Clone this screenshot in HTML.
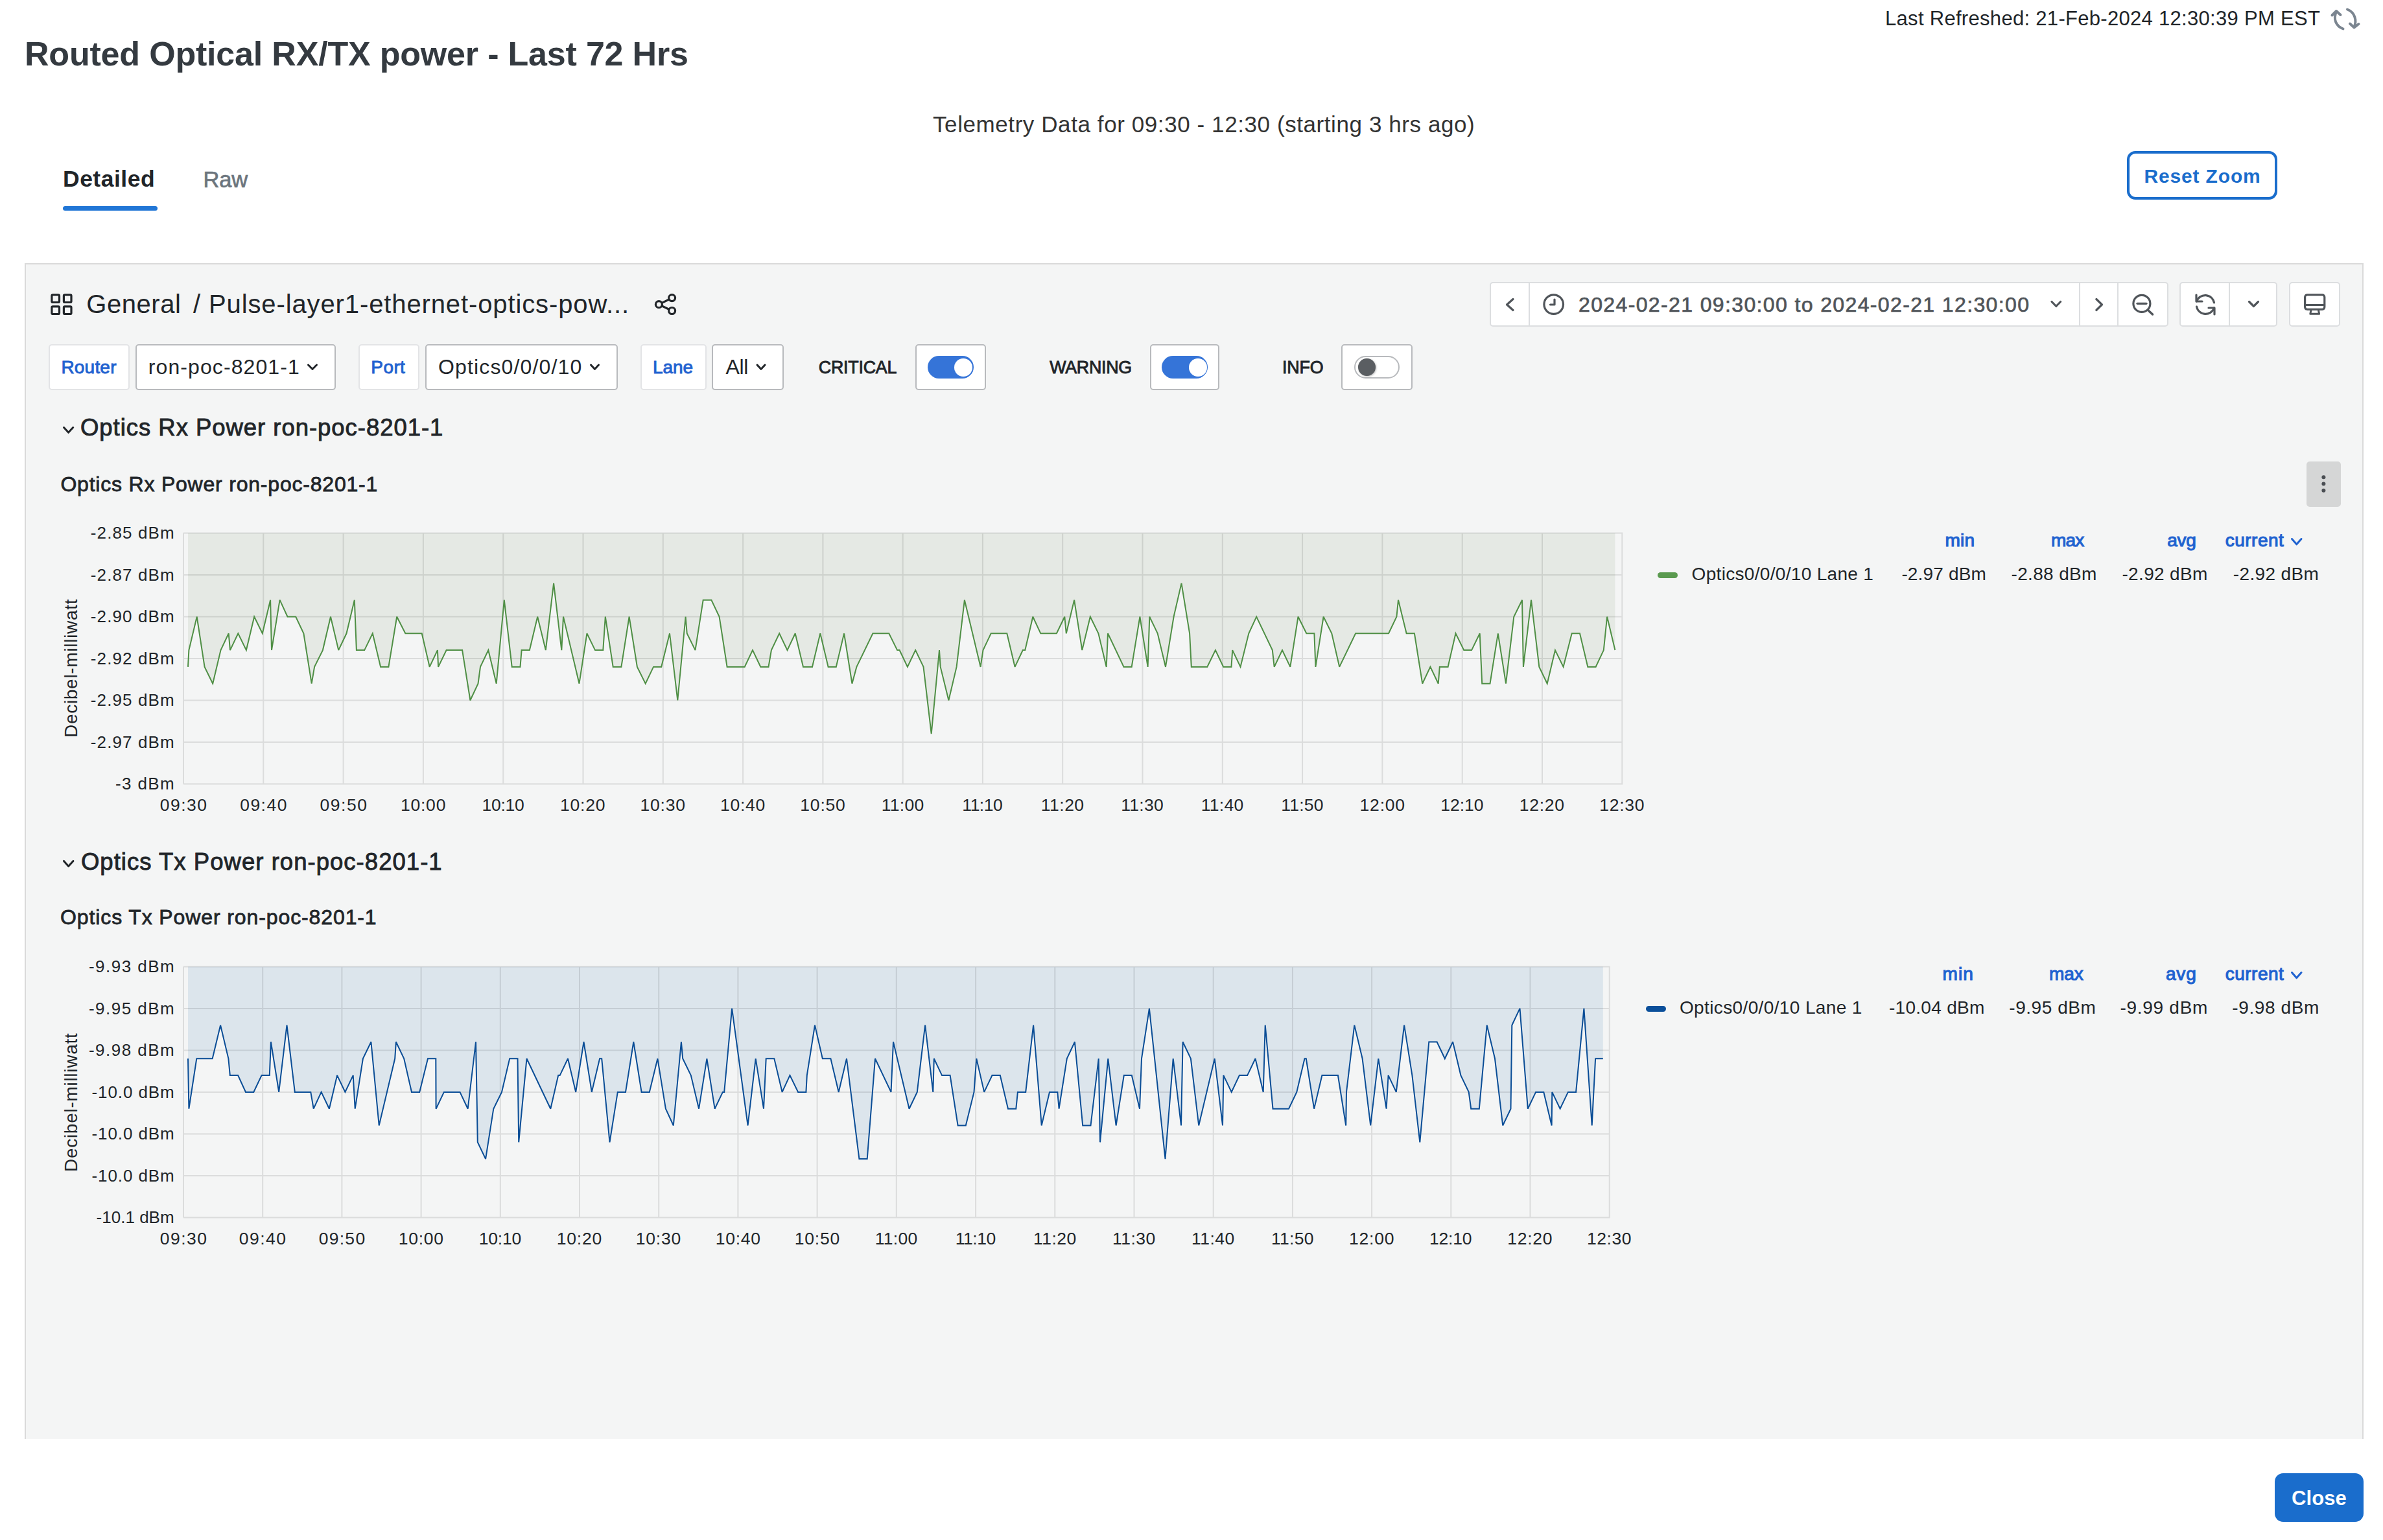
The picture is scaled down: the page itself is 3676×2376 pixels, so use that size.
<!DOCTYPE html>
<html><head><meta charset="utf-8">
<style>
html,body{margin:0;padding:0;}
body{width:3676px;height:2376px;position:relative;overflow:hidden;background:#ffffff;font-family:"Liberation Sans", sans-serif;}
.abs{position:absolute;}
.t{position:absolute;white-space:nowrap;font-family:"Liberation Sans", sans-serif;}
.box{position:absolute;box-sizing:border-box;background:#fff;}
</style></head><body>
<!-- panel -->
<div class="box" style="left:38px;top:406px;width:3608px;height:1814px;background:#f4f5f5;border:2px solid #dadada;border-bottom:none;"></div>
<!-- tab underline -->
<div class="abs" style="left:97px;top:318px;width:146px;height:7px;border-radius:4px;background:#2176d6;"></div>
<!-- reset zoom -->
<div class="box" style="left:3281px;top:233px;width:232px;height:75px;border:4px solid #1a6dcc;border-radius:13px;"></div>
<!-- close -->
<div class="abs" style="left:3509px;top:2273px;width:137px;height:75px;border-radius:13px;background:#1a6dcc;"></div>
<!-- time picker boxes -->
<div class="box" style="left:2298px;top:435px;width:1047px;height:69px;border:2px solid #dcdee0;border-radius:5px;"></div>
<div class="abs" style="left:2358px;top:436px;width:2px;height:67px;background:#dcdee0;"></div>
<div class="abs" style="left:3207px;top:436px;width:2px;height:67px;background:#dcdee0;"></div>
<div class="abs" style="left:3266px;top:436px;width:2px;height:67px;background:#dcdee0;"></div>
<div class="box" style="left:3362px;top:435px;width:151px;height:69px;border:2px solid #dcdee0;border-radius:5px;"></div>
<div class="abs" style="left:3438px;top:436px;width:2px;height:67px;background:#dcdee0;"></div>
<div class="box" style="left:3531px;top:435px;width:79px;height:69px;border:2px solid #dcdee0;border-radius:5px;"></div>
<!-- variable boxes -->
<div class="box" style="left:75px;top:531px;width:125px;height:71px;border:2px solid #e3e4e6;border-radius:5px;"></div>
<div class="box" style="left:209px;top:531px;width:309px;height:71px;border:2px solid #b8babd;border-radius:5px;"></div>
<div class="box" style="left:553px;top:531px;width:94px;height:71px;border:2px solid #e3e4e6;border-radius:5px;"></div>
<div class="box" style="left:656px;top:531px;width:297px;height:71px;border:2px solid #b8babd;border-radius:5px;"></div>
<div class="box" style="left:988px;top:531px;width:102px;height:71px;border:2px solid #e3e4e6;border-radius:5px;"></div>
<div class="box" style="left:1098px;top:531px;width:111px;height:71px;border:2px solid #b8babd;border-radius:5px;"></div>
<!-- toggles -->
<div class="box" style="left:1412px;top:531px;width:109px;height:71px;border:2px solid #b8babd;border-radius:5px;"></div>
<div class="abs" style="left:1431px;top:549px;width:71px;height:35px;border-radius:18px;background:#3574d8;"></div>
<div class="abs" style="left:1472px;top:552.5px;width:28px;height:28px;border-radius:50%;background:#fff;"></div>
<div class="box" style="left:1774px;top:531px;width:107px;height:71px;border:2px solid #b8babd;border-radius:5px;"></div>
<div class="abs" style="left:1792px;top:549px;width:71px;height:35px;border-radius:18px;background:#3574d8;"></div>
<div class="abs" style="left:1833.5px;top:552.5px;width:28px;height:28px;border-radius:50%;background:#fff;"></div>
<div class="box" style="left:2069px;top:531px;width:110px;height:71px;border:2px solid #b8babd;border-radius:5px;"></div>
<div class="box" style="left:2089px;top:549px;width:70px;height:35px;border:2px solid #b8babd;border-radius:18px;"></div>
<div class="abs" style="left:2095px;top:553px;width:26.5px;height:26.5px;border-radius:50%;background:#5a5e62;box-shadow:1px 1px 3px rgba(0,0,0,0.25);"></div>
<!-- kebab -->
<div class="abs" style="left:3558px;top:712px;width:53px;height:70px;border-radius:5px;background:#d5d6d6;"></div>
<!-- legend swatches -->
<div class="abs" style="left:2557px;top:883px;width:31px;height:9px;border-radius:5px;background:#5a9a4f;"></div>
<div class="abs" style="left:2538.5px;top:1552px;width:31px;height:9px;border-radius:5px;background:#0a4f9a;"></div>

<svg class="abs" style="left:0;top:0" width="3676" height="2376" viewBox="0 0 3676 2376">
<path d="M290.0 822.5 L290.0 1028.9 L291.4 1003.1 L303.7 951.5 L315.6 1028.9 L328.2 1054.7 L340.5 1003.1 L352.7 977.3 L355.0 1003.1 L367.3 977.3 L379.9 1003.1 L392.2 951.5 L404.8 977.3 L417.1 925.7 L419.0 1003.1 L431.6 925.7 L443.5 951.5 L456.2 951.5 L468.4 977.3 L480.7 1054.7 L485.1 1028.9 L497.9 1003.1 L510.0 951.5 L522.2 1003.1 L534.5 977.3 L546.8 925.7 L549.9 1003.1 L562.2 1003.1 L574.8 977.3 L587.1 1028.9 L599.4 1028.9 L612.2 951.5 L625.3 977.3 L638.5 977.3 L650.7 977.3 L662.7 1028.9 L674.9 1003.1 L676.1 1028.9 L688.6 1003.1 L713.1 1003.1 L725.4 1080.5 L737.5 1054.7 L741.0 1028.9 L753.3 1003.1 L765.7 1054.7 L777.8 925.7 L789.7 1028.9 L802.5 1028.9 L804.6 1003.1 L816.9 1003.1 L829.2 951.5 L841.8 1003.1 L854.1 899.9 L866.3 1003.1 L869.0 951.5 L893.5 1054.7 L905.4 977.3 L918.0 1003.1 L930.3 1003.1 L933.8 951.5 L945.7 1028.9 L958.4 1028.9 L970.6 951.5 L982.9 1028.9 L995.7 1054.7 L1008.0 1028.9 L1020.2 1028.9 L1033.0 977.3 L1045.3 1080.5 L1057.6 951.5 L1059.7 977.3 L1072.5 1003.1 L1084.7 925.7 L1097.4 925.7 L1109.6 951.5 L1121.6 1028.9 L1148.7 1028.9 L1161.0 1003.1 L1173.3 1028.9 L1185.5 1028.9 L1189.9 1003.1 L1202.2 977.3 L1214.5 1003.1 L1226.7 977.3 L1239.0 1028.9 L1253.0 1028.9 L1265.3 977.3 L1277.6 1028.9 L1289.8 1028.9 L1302.1 977.3 L1314.4 1054.7 L1321.4 1028.9 L1346.4 977.3 L1371.3 977.3 L1384.1 1003.1 L1387.6 1003.1 L1399.9 1028.9 L1412.2 1003.1 L1424.5 1028.9 L1436.7 1132.1 L1449.0 1003.1 L1450.7 1028.9 L1463.4 1080.5 L1475.6 1028.9 L1487.9 925.7 L1512.6 1028.9 L1516.5 1003.1 L1528.7 977.3 L1553.3 977.3 L1565.6 1028.9 L1577.8 1003.1 L1581.3 1003.1 L1593.3 951.5 L1605.3 977.3 L1629.9 977.3 L1642.3 951.5 L1644.8 977.3 L1657.1 925.7 L1669.3 1003.1 L1681.8 951.5 L1694.4 977.3 L1706.7 1028.9 L1709.0 977.3 L1733.5 1028.9 L1745.7 1028.9 L1758.4 951.5 L1770.6 1028.9 L1773.3 951.5 L1785.7 977.3 L1798.0 1028.9 L1810.6 951.5 L1822.5 899.9 L1835.1 977.3 L1837.8 1028.9 L1862.3 1028.9 L1874.9 1003.1 L1887.2 1028.9 L1899.5 1028.9 L1901.2 1003.1 L1913.5 1028.9 L1926.3 977.3 L1938.2 951.5 L1962.8 1003.1 L1965.7 1028.9 L1978.0 1003.1 L1990.3 1028.9 L2002.5 951.5 L2015.3 977.3 L2027.4 977.3 L2029.4 1028.9 L2041.6 951.5 L2054.3 977.3 L2066.2 1028.9 L2091.1 977.3 L2142.1 977.3 L2154.4 951.5 L2157.0 925.7 L2169.6 977.3 L2181.9 977.3 L2194.2 1054.7 L2206.4 1028.9 L2218.7 1054.7 L2220.8 1028.9 L2233.6 1028.9 L2245.5 977.3 L2258.2 1003.1 L2270.1 1003.1 L2282.7 977.3 L2286.2 1054.7 L2298.5 1054.7 L2310.8 977.3 L2323.0 1054.7 L2335.3 951.5 L2348.0 925.7 L2349.9 1028.9 L2362.0 925.7 L2374.3 1028.9 L2386.7 1054.7 L2399.0 1003.1 L2411.6 1028.9 L2424.7 977.3 L2437.0 977.3 L2449.3 1028.9 L2461.6 1028.9 L2473.8 1003.1 L2479.1 951.5 L2491.4 1003.1 L2491.4 822.5 Z" fill="#e5e9e4"/>
<path d="M283.0 822.5H2503.3 M283.0 887.0H2503.3 M283.0 951.5H2503.3 M283.0 1016.0H2503.3 M283.0 1080.5H2503.3 M283.0 1145.0H2503.3 M283.0 1209.5H2503.3 M283.0 822.5V1209.5 M406.3 822.5V1209.5 M529.6 822.5V1209.5 M652.9 822.5V1209.5 M776.2 822.5V1209.5 M899.5 822.5V1209.5 M1022.8 822.5V1209.5 M1146.1 822.5V1209.5 M1269.4 822.5V1209.5 M1392.7 822.5V1209.5 M1515.9 822.5V1209.5 M1639.2 822.5V1209.5 M1762.5 822.5V1209.5 M1885.8 822.5V1209.5 M2009.1 822.5V1209.5 M2132.4 822.5V1209.5 M2255.7 822.5V1209.5 M2379.0 822.5V1209.5 M2502.3 822.5V1209.5" stroke="rgba(0,0,0,0.1)" stroke-width="2" fill="none"/>
<path d="M290.0 1028.9 L291.4 1003.1 L303.7 951.5 L315.6 1028.9 L328.2 1054.7 L340.5 1003.1 L352.7 977.3 L355.0 1003.1 L367.3 977.3 L379.9 1003.1 L392.2 951.5 L404.8 977.3 L417.1 925.7 L419.0 1003.1 L431.6 925.7 L443.5 951.5 L456.2 951.5 L468.4 977.3 L480.7 1054.7 L485.1 1028.9 L497.9 1003.1 L510.0 951.5 L522.2 1003.1 L534.5 977.3 L546.8 925.7 L549.9 1003.1 L562.2 1003.1 L574.8 977.3 L587.1 1028.9 L599.4 1028.9 L612.2 951.5 L625.3 977.3 L638.5 977.3 L650.7 977.3 L662.7 1028.9 L674.9 1003.1 L676.1 1028.9 L688.6 1003.1 L713.1 1003.1 L725.4 1080.5 L737.5 1054.7 L741.0 1028.9 L753.3 1003.1 L765.7 1054.7 L777.8 925.7 L789.7 1028.9 L802.5 1028.9 L804.6 1003.1 L816.9 1003.1 L829.2 951.5 L841.8 1003.1 L854.1 899.9 L866.3 1003.1 L869.0 951.5 L893.5 1054.7 L905.4 977.3 L918.0 1003.1 L930.3 1003.1 L933.8 951.5 L945.7 1028.9 L958.4 1028.9 L970.6 951.5 L982.9 1028.9 L995.7 1054.7 L1008.0 1028.9 L1020.2 1028.9 L1033.0 977.3 L1045.3 1080.5 L1057.6 951.5 L1059.7 977.3 L1072.5 1003.1 L1084.7 925.7 L1097.4 925.7 L1109.6 951.5 L1121.6 1028.9 L1148.7 1028.9 L1161.0 1003.1 L1173.3 1028.9 L1185.5 1028.9 L1189.9 1003.1 L1202.2 977.3 L1214.5 1003.1 L1226.7 977.3 L1239.0 1028.9 L1253.0 1028.9 L1265.3 977.3 L1277.6 1028.9 L1289.8 1028.9 L1302.1 977.3 L1314.4 1054.7 L1321.4 1028.9 L1346.4 977.3 L1371.3 977.3 L1384.1 1003.1 L1387.6 1003.1 L1399.9 1028.9 L1412.2 1003.1 L1424.5 1028.9 L1436.7 1132.1 L1449.0 1003.1 L1450.7 1028.9 L1463.4 1080.5 L1475.6 1028.9 L1487.9 925.7 L1512.6 1028.9 L1516.5 1003.1 L1528.7 977.3 L1553.3 977.3 L1565.6 1028.9 L1577.8 1003.1 L1581.3 1003.1 L1593.3 951.5 L1605.3 977.3 L1629.9 977.3 L1642.3 951.5 L1644.8 977.3 L1657.1 925.7 L1669.3 1003.1 L1681.8 951.5 L1694.4 977.3 L1706.7 1028.9 L1709.0 977.3 L1733.5 1028.9 L1745.7 1028.9 L1758.4 951.5 L1770.6 1028.9 L1773.3 951.5 L1785.7 977.3 L1798.0 1028.9 L1810.6 951.5 L1822.5 899.9 L1835.1 977.3 L1837.8 1028.9 L1862.3 1028.9 L1874.9 1003.1 L1887.2 1028.9 L1899.5 1028.9 L1901.2 1003.1 L1913.5 1028.9 L1926.3 977.3 L1938.2 951.5 L1962.8 1003.1 L1965.7 1028.9 L1978.0 1003.1 L1990.3 1028.9 L2002.5 951.5 L2015.3 977.3 L2027.4 977.3 L2029.4 1028.9 L2041.6 951.5 L2054.3 977.3 L2066.2 1028.9 L2091.1 977.3 L2142.1 977.3 L2154.4 951.5 L2157.0 925.7 L2169.6 977.3 L2181.9 977.3 L2194.2 1054.7 L2206.4 1028.9 L2218.7 1054.7 L2220.8 1028.9 L2233.6 1028.9 L2245.5 977.3 L2258.2 1003.1 L2270.1 1003.1 L2282.7 977.3 L2286.2 1054.7 L2298.5 1054.7 L2310.8 977.3 L2323.0 1054.7 L2335.3 951.5 L2348.0 925.7 L2349.9 1028.9 L2362.0 925.7 L2374.3 1028.9 L2386.7 1054.7 L2399.0 1003.1 L2411.6 1028.9 L2424.7 977.3 L2437.0 977.3 L2449.3 1028.9 L2461.6 1028.9 L2473.8 1003.1 L2479.1 951.5 L2491.4 1003.1" stroke="#4f8f45" stroke-width="2" fill="none" stroke-linejoin="miter" stroke-miterlimit="3"/>
</svg>
<svg class="abs" style="left:0;top:0" width="3676" height="2376" viewBox="0 0 3676 2376">
<path d="M290.0 1491.4 L290.0 1633.3 L291.4 1710.7 L303.3 1633.3 L327.7 1633.3 L340.1 1581.7 L352.4 1633.3 L354.8 1659.1 L367.1 1659.1 L379.0 1684.9 L391.3 1684.9 L403.6 1659.1 L415.8 1659.1 L417.9 1607.5 L430.2 1684.9 L442.5 1581.7 L454.8 1684.9 L479.3 1684.9 L483.7 1710.7 L495.6 1684.9 L507.9 1710.7 L520.1 1659.1 L532.4 1684.9 L544.7 1659.1 L547.7 1710.7 L559.9 1633.3 L572.4 1607.5 L584.7 1736.5 L609.2 1633.3 L610.9 1607.5 L623.2 1633.3 L635.0 1684.9 L647.2 1684.9 L660.0 1633.3 L672.3 1633.3 L672.6 1710.7 L684.9 1684.9 L709.5 1684.9 L721.7 1710.7 L734.0 1607.5 L736.8 1762.3 L749.1 1788.1 L761.3 1710.7 L774.0 1684.9 L786.2 1633.3 L798.5 1633.3 L800.2 1762.3 L812.5 1633.3 L849.3 1710.7 L861.2 1659.1 L863.7 1659.1 L876.0 1633.3 L888.2 1684.9 L900.5 1607.5 L912.8 1684.9 L925.1 1633.3 L928.2 1633.3 L940.5 1762.3 L952.8 1684.9 L965.0 1684.9 L977.3 1607.5 L989.6 1684.9 L1001.8 1684.9 L1014.4 1633.3 L1026.9 1710.7 L1038.8 1736.5 L1050.9 1607.5 L1053.2 1633.3 L1065.8 1659.1 L1078.1 1710.7 L1090.4 1633.3 L1102.6 1710.7 L1114.9 1684.9 L1117.2 1684.9 L1129.1 1555.9 L1153.6 1736.5 L1165.7 1633.3 L1178.0 1710.7 L1181.7 1633.3 L1194.3 1633.3 L1206.6 1684.9 L1218.5 1659.1 L1231.1 1684.9 L1243.4 1684.9 L1244.8 1659.1 L1257.0 1581.7 L1268.8 1633.3 L1281.4 1633.3 L1293.7 1684.9 L1306.0 1633.3 L1325.4 1788.1 L1337.7 1788.1 L1350.0 1633.3 L1374.5 1684.9 L1378.0 1607.5 L1402.5 1710.7 L1414.8 1684.9 L1427.1 1581.7 L1439.3 1684.9 L1440.8 1633.3 L1453.0 1659.1 L1465.6 1659.1 L1477.6 1736.5 L1489.8 1736.5 L1502.5 1684.9 L1506.3 1633.3 L1518.2 1684.9 L1530.5 1659.1 L1542.8 1659.1 L1555.0 1710.7 L1567.3 1710.7 L1569.9 1684.9 L1582.2 1684.9 L1594.1 1581.7 L1606.7 1736.5 L1619.0 1684.9 L1631.3 1684.9 L1633.6 1710.7 L1645.8 1633.3 L1657.9 1607.5 L1670.2 1736.5 L1682.5 1736.5 L1694.7 1633.3 L1697.0 1762.3 L1709.3 1633.3 L1721.6 1736.5 L1733.8 1659.1 L1745.8 1659.1 L1758.0 1710.7 L1761.0 1633.3 L1772.9 1555.9 L1797.5 1788.1 L1809.7 1633.3 L1822.0 1736.5 L1824.6 1607.5 L1836.9 1633.3 L1849.2 1736.5 L1873.7 1633.3 L1886.0 1736.5 L1887.4 1659.1 L1899.7 1684.9 L1911.9 1659.1 L1924.2 1659.1 L1936.5 1633.3 L1948.7 1684.9 L1951.7 1581.7 L1963.5 1710.7 L1988.0 1710.7 L2000.3 1684.9 L2012.5 1633.3 L2014.8 1633.3 L2027.1 1710.7 L2039.4 1659.1 L2063.9 1659.1 L2076.2 1736.5 L2077.0 1684.9 L2089.3 1581.7 L2101.6 1633.3 L2114.2 1736.5 L2126.3 1633.3 L2138.6 1710.7 L2141.6 1659.1 L2153.8 1684.9 L2166.1 1581.7 L2178.4 1659.1 L2190.3 1762.3 L2204.3 1607.5 L2216.6 1607.5 L2228.8 1633.3 L2241.1 1607.5 L2253.4 1659.1 L2265.7 1684.9 L2269.2 1710.7 L2281.8 1710.7 L2293.7 1581.7 L2306.0 1633.3 L2318.2 1736.5 L2330.5 1710.7 L2332.3 1581.7 L2344.5 1555.9 L2356.8 1710.7 L2369.1 1684.9 L2381.3 1684.9 L2393.6 1736.5 L2394.3 1684.9 L2406.6 1710.7 L2418.9 1684.9 L2431.1 1684.9 L2443.4 1555.9 L2455.7 1736.5 L2461.1 1633.3 L2472.8 1633.3 L2472.8 1491.4 Z" fill="#dce5ec"/>
<path d="M283.0 1491.4H2483.7 M283.0 1555.9H2483.7 M283.0 1620.4H2483.7 M283.0 1684.9H2483.7 M283.0 1749.4H2483.7 M283.0 1813.9H2483.7 M283.0 1878.4H2483.7 M283.0 1491.4V1878.4 M405.2 1491.4V1878.4 M527.4 1491.4V1878.4 M649.6 1491.4V1878.4 M771.8 1491.4V1878.4 M894.0 1491.4V1878.4 M1016.2 1491.4V1878.4 M1138.4 1491.4V1878.4 M1260.6 1491.4V1878.4 M1382.8 1491.4V1878.4 M1505.1 1491.4V1878.4 M1627.3 1491.4V1878.4 M1749.5 1491.4V1878.4 M1871.7 1491.4V1878.4 M1993.9 1491.4V1878.4 M2116.1 1491.4V1878.4 M2238.3 1491.4V1878.4 M2360.5 1491.4V1878.4 M2482.7 1491.4V1878.4" stroke="rgba(0,0,0,0.1)" stroke-width="2" fill="none"/>
<path d="M290.0 1633.3 L291.4 1710.7 L303.3 1633.3 L327.7 1633.3 L340.1 1581.7 L352.4 1633.3 L354.8 1659.1 L367.1 1659.1 L379.0 1684.9 L391.3 1684.9 L403.6 1659.1 L415.8 1659.1 L417.9 1607.5 L430.2 1684.9 L442.5 1581.7 L454.8 1684.9 L479.3 1684.9 L483.7 1710.7 L495.6 1684.9 L507.9 1710.7 L520.1 1659.1 L532.4 1684.9 L544.7 1659.1 L547.7 1710.7 L559.9 1633.3 L572.4 1607.5 L584.7 1736.5 L609.2 1633.3 L610.9 1607.5 L623.2 1633.3 L635.0 1684.9 L647.2 1684.9 L660.0 1633.3 L672.3 1633.3 L672.6 1710.7 L684.9 1684.9 L709.5 1684.9 L721.7 1710.7 L734.0 1607.5 L736.8 1762.3 L749.1 1788.1 L761.3 1710.7 L774.0 1684.9 L786.2 1633.3 L798.5 1633.3 L800.2 1762.3 L812.5 1633.3 L849.3 1710.7 L861.2 1659.1 L863.7 1659.1 L876.0 1633.3 L888.2 1684.9 L900.5 1607.5 L912.8 1684.9 L925.1 1633.3 L928.2 1633.3 L940.5 1762.3 L952.8 1684.9 L965.0 1684.9 L977.3 1607.5 L989.6 1684.9 L1001.8 1684.9 L1014.4 1633.3 L1026.9 1710.7 L1038.8 1736.5 L1050.9 1607.5 L1053.2 1633.3 L1065.8 1659.1 L1078.1 1710.7 L1090.4 1633.3 L1102.6 1710.7 L1114.9 1684.9 L1117.2 1684.9 L1129.1 1555.9 L1153.6 1736.5 L1165.7 1633.3 L1178.0 1710.7 L1181.7 1633.3 L1194.3 1633.3 L1206.6 1684.9 L1218.5 1659.1 L1231.1 1684.9 L1243.4 1684.9 L1244.8 1659.1 L1257.0 1581.7 L1268.8 1633.3 L1281.4 1633.3 L1293.7 1684.9 L1306.0 1633.3 L1325.4 1788.1 L1337.7 1788.1 L1350.0 1633.3 L1374.5 1684.9 L1378.0 1607.5 L1402.5 1710.7 L1414.8 1684.9 L1427.1 1581.7 L1439.3 1684.9 L1440.8 1633.3 L1453.0 1659.1 L1465.6 1659.1 L1477.6 1736.5 L1489.8 1736.5 L1502.5 1684.9 L1506.3 1633.3 L1518.2 1684.9 L1530.5 1659.1 L1542.8 1659.1 L1555.0 1710.7 L1567.3 1710.7 L1569.9 1684.9 L1582.2 1684.9 L1594.1 1581.7 L1606.7 1736.5 L1619.0 1684.9 L1631.3 1684.9 L1633.6 1710.7 L1645.8 1633.3 L1657.9 1607.5 L1670.2 1736.5 L1682.5 1736.5 L1694.7 1633.3 L1697.0 1762.3 L1709.3 1633.3 L1721.6 1736.5 L1733.8 1659.1 L1745.8 1659.1 L1758.0 1710.7 L1761.0 1633.3 L1772.9 1555.9 L1797.5 1788.1 L1809.7 1633.3 L1822.0 1736.5 L1824.6 1607.5 L1836.9 1633.3 L1849.2 1736.5 L1873.7 1633.3 L1886.0 1736.5 L1887.4 1659.1 L1899.7 1684.9 L1911.9 1659.1 L1924.2 1659.1 L1936.5 1633.3 L1948.7 1684.9 L1951.7 1581.7 L1963.5 1710.7 L1988.0 1710.7 L2000.3 1684.9 L2012.5 1633.3 L2014.8 1633.3 L2027.1 1710.7 L2039.4 1659.1 L2063.9 1659.1 L2076.2 1736.5 L2077.0 1684.9 L2089.3 1581.7 L2101.6 1633.3 L2114.2 1736.5 L2126.3 1633.3 L2138.6 1710.7 L2141.6 1659.1 L2153.8 1684.9 L2166.1 1581.7 L2178.4 1659.1 L2190.3 1762.3 L2204.3 1607.5 L2216.6 1607.5 L2228.8 1633.3 L2241.1 1607.5 L2253.4 1659.1 L2265.7 1684.9 L2269.2 1710.7 L2281.8 1710.7 L2293.7 1581.7 L2306.0 1633.3 L2318.2 1736.5 L2330.5 1710.7 L2332.3 1581.7 L2344.5 1555.9 L2356.8 1710.7 L2369.1 1684.9 L2381.3 1684.9 L2393.6 1736.5 L2394.3 1684.9 L2406.6 1710.7 L2418.9 1684.9 L2431.1 1684.9 L2443.4 1555.9 L2455.7 1736.5 L2461.1 1633.3 L2472.8 1633.3" stroke="#0a4d96" stroke-width="2" fill="none" stroke-linejoin="miter" stroke-miterlimit="3"/>
</svg>

<!-- icons -->
<svg class="abs" style="left:0;top:0" width="3676" height="2376" viewBox="0 0 3676 2376" fill="none" stroke-linecap="round" stroke-linejoin="round">
 <!-- top refresh -->
 <g stroke="#7b8590" stroke-width="4">
  <path d="M3614.5 44.5 C3603 40 3599 29 3604 18"/><path d="M3597.5 23.5 L3604 17 L3610.5 23"/>
  <path d="M3621 14.5 C3632.5 19 3636 31 3631.5 42"/><path d="M3625 36.5 L3631.5 42.5 L3638.5 37"/>
 </g>
 <!-- grid icon -->
 <g stroke="#212529" stroke-width="3.2">
  <rect x="79.9" y="454.9" width="11.6" height="11.6" rx="1.5"/><rect x="98.4" y="454.9" width="11.6" height="11.6" rx="1.5"/>
  <rect x="79.9" y="472.9" width="11.6" height="11.6" rx="1.5"/><rect x="98.4" y="472.9" width="11.6" height="11.6" rx="1.5"/>
 </g>
 <!-- share -->
 <g stroke="#212529" stroke-width="3.2">
  <circle cx="1036.6" cy="459.6" r="5"/><circle cx="1016.4" cy="469.7" r="5"/><circle cx="1036.6" cy="479.5" r="5"/>
  <path d="M1021 467.4 L1032 462"/><path d="M1021 472 L1032 477.2"/>
 </g>
 <!-- time picker icons -->
 <g stroke="#50555a" stroke-width="3.5">
  <path d="M2334 461.5 L2324.5 470 L2334 478.5" stroke-width="3.2"/>
  <circle cx="2396.7" cy="469.6" r="14.8" stroke-width="3.2"/>
  <path d="M2398 462 V470 H2391.5" stroke-width="3.2"/>
  <path d="M3165 465.5 L3171.8 472.5 L3178.6 465.5" stroke-width="3.2"/>
  <path d="M3233.8 461.5 L3242.5 470 L3233.8 478.5" stroke-width="3.2"/>
  <circle cx="3303.9" cy="468.4" r="13" stroke-width="3.2"/>
  <path d="M3297 468.3 H3311" stroke-width="3.2"/>
  <path d="M3314 479 L3320.5 485" stroke-width="3.5"/>
  <path d="M3388.5 465 A14 14 0 0 1 3415.5 467" stroke-width="3.2"/>
  <path d="M3415.5 475 A14 14 0 0 1 3388.5 473" stroke-width="3.2"/>
  <path d="M3388 455 V465 H3397" stroke-width="3.2"/>
  <path d="M3416 485 V475 H3407" stroke-width="3.2"/>
  <path d="M3469.5 465.5 L3476.5 472.5 L3483.5 465.5" stroke-width="3.2"/>
  <rect x="3555.6" y="454.8" width="30.2" height="22.5" rx="3.5" stroke-width="3.2"/>
  <path d="M3556 470.5 H3585.5" stroke-width="3.2"/>
  <path d="M3565 478.5 L3563.8 484.3 H3577.6 L3576.4 478.5" stroke-width="3"/>
 </g>
 <!-- select chevrons -->
 <g stroke="#212529" stroke-width="3">
  <path d="M475.5 563 L482 569.5 L488.5 563"/>
  <path d="M911.5 563 L917.5 569.5 L923.5 563"/>
  <path d="M1168 563 L1174 569.5 L1180 563"/>
  <path d="M98.5 659.5 L105.6 667.3 L112.7 659.5"/>
  <path d="M98.5 1328.4 L105.6 1336.6 L112.9 1328.4"/>
 </g>
 <g stroke="#1f62d0" stroke-width="3">
  <path d="M3535.5 831.5 L3542.7 839.8 L3550 831.5"/>
  <path d="M3535.5 1500.5 L3542.7 1508.8 L3550 1500.5"/>
 </g>
 <g fill="#4a4e53" stroke="none">
  <circle cx="3584.4" cy="736.2" r="3"/><circle cx="3584.4" cy="746.5" r="3"/><circle cx="3584.4" cy="756.7" r="3"/>
 </g>
</svg>

<div class="t" style="left:38.00px;top:56.98px;font-size:52.00px;line-height:52.00px;letter-spacing:-0.195px;color:#343a40;font-weight:bold;">Routed Optical RX/TX power - Last 72 Hrs</div>
<div class="t" style="left:2908.00px;top:12.86px;font-size:31.00px;line-height:31.00px;letter-spacing:0.302px;color:#212529;font-weight:normal;">Last Refreshed: 21-Feb-2024 12:30:39 PM EST</div>
<div class="t" style="left:1439.00px;top:174.47px;font-size:35.00px;line-height:35.00px;letter-spacing:0.583px;color:#333333;font-weight:normal;">Telemetry Data for 09:30 - 12:30 (starting 3 hrs ago)</div>
<div class="t" style="left:97.00px;top:259.25px;font-size:35.50px;line-height:35.50px;letter-spacing:0.495px;color:#212529;font-weight:bold;">Detailed</div>
<div class="t" style="left:313.54px;top:260.10px;font-size:34.50px;line-height:34.50px;letter-spacing:-0.241px;color:#6c757d;font-weight:normal;-webkit-text-stroke:0.70px #6c757d;">Raw</div>
<div class="t" style="left:3307.46px;top:256.50px;font-size:30.00px;line-height:30.00px;letter-spacing:0.844px;color:#1a6dcc;font-weight:bold;">Reset Zoom</div>
<div class="t" style="left:133.30px;top:449.04px;font-size:40.00px;line-height:40.00px;letter-spacing:0.540px;color:#212529;font-weight:normal;">General</div>
<div class="t" style="left:298.00px;top:449.04px;font-size:40.00px;line-height:40.00px;letter-spacing:0.884px;color:#212529;font-weight:normal;">/ Pulse-layer1-ethernet-optics-pow...</div>
<div class="t" style="left:2435.00px;top:454.21px;font-size:32.00px;line-height:32.00px;letter-spacing:1.371px;color:#50555a;font-weight:normal;-webkit-text-stroke:0.70px #50555a;">2024-02-21 09:30:00 to 2024-02-21 12:30:00</div>
<div class="t" style="left:94.38px;top:552.70px;font-size:28.00px;line-height:28.00px;letter-spacing:0.213px;color:#1f62d0;font-weight:normal;-webkit-text-stroke:0.90px #1f62d0;">Router</div>
<div class="t" style="left:228.84px;top:550.31px;font-size:32.00px;line-height:32.00px;letter-spacing:1.086px;color:#212529;font-weight:normal;">ron-poc-8201-1</div>
<div class="t" style="left:572.34px;top:552.70px;font-size:28.00px;line-height:28.00px;letter-spacing:0.403px;color:#1f62d0;font-weight:normal;-webkit-text-stroke:0.90px #1f62d0;">Port</div>
<div class="t" style="left:675.88px;top:550.31px;font-size:32.00px;line-height:32.00px;letter-spacing:1.163px;color:#212529;font-weight:normal;">Optics0/0/0/10</div>
<div class="t" style="left:1006.92px;top:552.70px;font-size:28.00px;line-height:28.00px;letter-spacing:-0.046px;color:#1f62d0;font-weight:normal;-webkit-text-stroke:0.90px #1f62d0;">Lane</div>
<div class="t" style="left:1119.46px;top:550.31px;font-size:32.00px;line-height:32.00px;letter-spacing:-0.357px;color:#212529;font-weight:normal;">All</div>
<div class="t" style="left:1262.76px;top:553.81px;font-size:26.80px;line-height:26.80px;letter-spacing:-0.201px;color:#212529;font-weight:normal;-webkit-text-stroke:0.90px #212529;">CRITICAL</div>
<div class="t" style="left:1619.26px;top:553.81px;font-size:26.80px;line-height:26.80px;letter-spacing:-0.282px;color:#212529;font-weight:normal;-webkit-text-stroke:0.90px #212529;">WARNING</div>
<div class="t" style="left:1977.88px;top:553.81px;font-size:26.80px;line-height:26.80px;letter-spacing:-0.128px;color:#212529;font-weight:normal;-webkit-text-stroke:0.90px #212529;">INFO</div>
<div class="t" style="left:124.00px;top:642.30px;font-size:36.50px;line-height:36.50px;letter-spacing:0.962px;color:#212529;font-weight:normal;-webkit-text-stroke:0.90px #212529;">Optics Rx Power ron-poc-8201-1</div>
<div class="t" style="left:93.42px;top:731.11px;font-size:32.00px;line-height:32.00px;letter-spacing:0.791px;color:#212529;font-weight:normal;-webkit-text-stroke:0.80px #212529;">Optics Rx Power ron-poc-8201-1</div>
<div class="t" style="left:124.88px;top:1311.50px;font-size:36.50px;line-height:36.50px;letter-spacing:1.034px;color:#212529;font-weight:normal;-webkit-text-stroke:0.90px #212529;">Optics Tx Power ron-poc-8201-1</div>
<div class="t" style="left:93.00px;top:1399.21px;font-size:32.00px;line-height:32.00px;letter-spacing:0.891px;color:#212529;font-weight:normal;-webkit-text-stroke:0.80px #212529;">Optics Tx Power ron-poc-8201-1</div>
<div class="t" style="left:3000.50px;top:819.90px;font-size:28.00px;line-height:28.00px;letter-spacing:0.288px;color:#1f62d0;font-weight:normal;-webkit-text-stroke:1.10px #1f62d0;">min</div>
<div class="t" style="left:3164.08px;top:819.90px;font-size:28.00px;line-height:28.00px;letter-spacing:-0.848px;color:#1f62d0;font-weight:normal;-webkit-text-stroke:1.10px #1f62d0;">max</div>
<div class="t" style="left:3343.34px;top:819.90px;font-size:28.00px;line-height:28.00px;letter-spacing:-0.316px;color:#1f62d0;font-weight:normal;-webkit-text-stroke:1.10px #1f62d0;">avg</div>
<div class="t" style="left:3432.76px;top:819.90px;font-size:28.00px;line-height:28.00px;letter-spacing:0.492px;color:#1f62d0;font-weight:normal;-webkit-text-stroke:1.10px #1f62d0;">current</div>
<div class="t" style="left:2609.58px;top:871.70px;font-size:28.00px;line-height:28.00px;letter-spacing:0.318px;color:#212529;font-weight:normal;">Optics0/0/0/10 Lane 1</div>
<div class="t" style="left:2933.38px;top:871.70px;font-size:28.00px;line-height:28.00px;letter-spacing:0.164px;color:#212529;font-weight:normal;">-2.97 dBm</div>
<div class="t" style="left:3102.50px;top:871.70px;font-size:28.00px;line-height:28.00px;letter-spacing:0.342px;color:#212529;font-weight:normal;">-2.88 dBm</div>
<div class="t" style="left:3273.42px;top:871.70px;font-size:28.00px;line-height:28.00px;letter-spacing:0.352px;color:#212529;font-weight:normal;">-2.92 dBm</div>
<div class="t" style="left:3444.84px;top:871.70px;font-size:28.00px;line-height:28.00px;letter-spacing:0.352px;color:#212529;font-weight:normal;">-2.92 dBm</div>
<div class="t" style="left:2996.50px;top:1488.90px;font-size:28.00px;line-height:28.00px;letter-spacing:1.078px;color:#1f62d0;font-weight:normal;-webkit-text-stroke:1.10px #1f62d0;">min</div>
<div class="t" style="left:3161.08px;top:1488.90px;font-size:28.00px;line-height:28.00px;letter-spacing:-0.118px;color:#1f62d0;font-weight:normal;-webkit-text-stroke:1.10px #1f62d0;">max</div>
<div class="t" style="left:3340.92px;top:1488.90px;font-size:28.00px;line-height:28.00px;letter-spacing:0.854px;color:#1f62d0;font-weight:normal;-webkit-text-stroke:1.10px #1f62d0;">avg</div>
<div class="t" style="left:3432.76px;top:1488.90px;font-size:28.00px;line-height:28.00px;letter-spacing:0.492px;color:#1f62d0;font-weight:normal;-webkit-text-stroke:1.10px #1f62d0;">current</div>
<div class="t" style="left:2590.96px;top:1540.70px;font-size:28.00px;line-height:28.00px;letter-spacing:0.374px;color:#212529;font-weight:normal;">Optics0/0/0/10 Lane 1</div>
<div class="t" style="left:2913.92px;top:1540.70px;font-size:28.00px;line-height:28.00px;letter-spacing:0.300px;color:#212529;font-weight:normal;">-10.04 dBm</div>
<div class="t" style="left:3099.34px;top:1540.70px;font-size:28.00px;line-height:28.00px;letter-spacing:0.539px;color:#212529;font-weight:normal;">-9.95 dBm</div>
<div class="t" style="left:3270.50px;top:1540.70px;font-size:28.00px;line-height:28.00px;letter-spacing:0.712px;color:#212529;font-weight:normal;">-9.99 dBm</div>
<div class="t" style="left:3443.34px;top:1540.70px;font-size:28.00px;line-height:28.00px;letter-spacing:0.602px;color:#212529;font-weight:normal;">-9.98 dBm</div>
<div class="t" style="left:3535.04px;top:2296.26px;font-size:31.00px;line-height:31.00px;letter-spacing:0.071px;color:#ffffff;font-weight:bold;">Close</div>
<div class="t" style="left:139.84px;top:809.29px;font-size:26.00px;line-height:26.00px;letter-spacing:1.109px;color:#212529;font-weight:normal;">-2.85 dBm</div>
<div class="t" style="left:139.84px;top:873.79px;font-size:26.00px;line-height:26.00px;letter-spacing:1.109px;color:#212529;font-weight:normal;">-2.87 dBm</div>
<div class="t" style="left:139.84px;top:938.29px;font-size:26.00px;line-height:26.00px;letter-spacing:1.109px;color:#212529;font-weight:normal;">-2.90 dBm</div>
<div class="t" style="left:139.84px;top:1002.79px;font-size:26.00px;line-height:26.00px;letter-spacing:1.109px;color:#212529;font-weight:normal;">-2.92 dBm</div>
<div class="t" style="left:139.84px;top:1067.29px;font-size:26.00px;line-height:26.00px;letter-spacing:1.109px;color:#212529;font-weight:normal;">-2.95 dBm</div>
<div class="t" style="left:139.84px;top:1131.79px;font-size:26.00px;line-height:26.00px;letter-spacing:1.109px;color:#212529;font-weight:normal;">-2.97 dBm</div>
<div class="t" style="left:177.92px;top:1196.29px;font-size:26.00px;line-height:26.00px;letter-spacing:1.387px;color:#212529;font-weight:normal;">-3 dBm</div>
<div class="t" style="left:246.71px;top:1228.57px;font-size:26.50px;line-height:26.50px;letter-spacing:1.501px;color:#212529;font-weight:normal;">09:30</div>
<div class="t" style="left:370.15px;top:1228.57px;font-size:26.50px;line-height:26.50px;letter-spacing:1.501px;color:#212529;font-weight:normal;">09:40</div>
<div class="t" style="left:493.58px;top:1228.57px;font-size:26.50px;line-height:26.50px;letter-spacing:1.501px;color:#212529;font-weight:normal;">09:50</div>
<div class="t" style="left:617.98px;top:1228.57px;font-size:26.50px;line-height:26.50px;letter-spacing:0.771px;color:#212529;font-weight:normal;">10:00</div>
<div class="t" style="left:743.38px;top:1228.57px;font-size:26.50px;line-height:26.50px;letter-spacing:-0.209px;color:#212529;font-weight:normal;">10:10</div>
<div class="t" style="left:864.05px;top:1228.57px;font-size:26.50px;line-height:26.50px;letter-spacing:0.771px;color:#212529;font-weight:normal;">10:20</div>
<div class="t" style="left:987.49px;top:1228.57px;font-size:26.50px;line-height:26.50px;letter-spacing:0.771px;color:#212529;font-weight:normal;">10:30</div>
<div class="t" style="left:1110.93px;top:1228.57px;font-size:26.50px;line-height:26.50px;letter-spacing:0.771px;color:#212529;font-weight:normal;">10:40</div>
<div class="t" style="left:1234.36px;top:1228.57px;font-size:26.50px;line-height:26.50px;letter-spacing:0.771px;color:#212529;font-weight:normal;">10:50</div>
<div class="t" style="left:1359.76px;top:1228.57px;font-size:26.50px;line-height:26.50px;letter-spacing:0.283px;color:#212529;font-weight:normal;">11:00</div>
<div class="t" style="left:1484.36px;top:1228.57px;font-size:26.50px;line-height:26.50px;letter-spacing:-0.497px;color:#212529;font-weight:normal;">11:10</div>
<div class="t" style="left:1605.83px;top:1228.57px;font-size:26.50px;line-height:26.50px;letter-spacing:0.483px;color:#212529;font-weight:normal;">11:20</div>
<div class="t" style="left:1729.27px;top:1228.57px;font-size:26.50px;line-height:26.50px;letter-spacing:0.283px;color:#212529;font-weight:normal;">11:30</div>
<div class="t" style="left:1852.71px;top:1228.57px;font-size:26.50px;line-height:26.50px;letter-spacing:0.283px;color:#212529;font-weight:normal;">11:40</div>
<div class="t" style="left:1976.14px;top:1228.57px;font-size:26.50px;line-height:26.50px;letter-spacing:0.283px;color:#212529;font-weight:normal;">11:50</div>
<div class="t" style="left:2097.62px;top:1228.57px;font-size:26.50px;line-height:26.50px;letter-spacing:0.771px;color:#212529;font-weight:normal;">12:00</div>
<div class="t" style="left:2222.22px;top:1228.57px;font-size:26.50px;line-height:26.50px;letter-spacing:-0.009px;color:#212529;font-weight:normal;">12:10</div>
<div class="t" style="left:2343.69px;top:1228.57px;font-size:26.50px;line-height:26.50px;letter-spacing:0.771px;color:#212529;font-weight:normal;">12:20</div>
<div class="t" style="left:2467.13px;top:1228.57px;font-size:26.50px;line-height:26.50px;letter-spacing:0.771px;color:#212529;font-weight:normal;">12:30</div>
<div class="t" style="left:137.00px;top:1478.19px;font-size:26.00px;line-height:26.00px;letter-spacing:1.464px;color:#212529;font-weight:normal;">-9.93 dBm</div>
<div class="t" style="left:137.00px;top:1542.69px;font-size:26.00px;line-height:26.00px;letter-spacing:1.464px;color:#212529;font-weight:normal;">-9.95 dBm</div>
<div class="t" style="left:137.00px;top:1607.19px;font-size:26.00px;line-height:26.00px;letter-spacing:1.464px;color:#212529;font-weight:normal;">-9.98 dBm</div>
<div class="t" style="left:141.50px;top:1671.69px;font-size:26.00px;line-height:26.00px;letter-spacing:0.902px;color:#212529;font-weight:normal;">-10.0 dBm</div>
<div class="t" style="left:141.50px;top:1736.19px;font-size:26.00px;line-height:26.00px;letter-spacing:0.902px;color:#212529;font-weight:normal;">-10.0 dBm</div>
<div class="t" style="left:141.50px;top:1800.69px;font-size:26.00px;line-height:26.00px;letter-spacing:0.902px;color:#212529;font-weight:normal;">-10.0 dBm</div>
<div class="t" style="left:148.46px;top:1865.19px;font-size:26.00px;line-height:26.00px;letter-spacing:0.032px;color:#212529;font-weight:normal;">-10.1 dBm</div>
<div class="t" style="left:246.71px;top:1897.57px;font-size:26.50px;line-height:26.50px;letter-spacing:1.501px;color:#212529;font-weight:normal;">09:30</div>
<div class="t" style="left:368.77px;top:1897.57px;font-size:26.50px;line-height:26.50px;letter-spacing:1.501px;color:#212529;font-weight:normal;">09:40</div>
<div class="t" style="left:491.64px;top:1897.57px;font-size:26.50px;line-height:26.50px;letter-spacing:1.301px;color:#212529;font-weight:normal;">09:50</div>
<div class="t" style="left:614.66px;top:1897.57px;font-size:26.50px;line-height:26.50px;letter-spacing:0.771px;color:#212529;font-weight:normal;">10:00</div>
<div class="t" style="left:738.68px;top:1897.57px;font-size:26.50px;line-height:26.50px;letter-spacing:-0.209px;color:#212529;font-weight:normal;">10:10</div>
<div class="t" style="left:858.79px;top:1897.57px;font-size:26.50px;line-height:26.50px;letter-spacing:0.771px;color:#212529;font-weight:normal;">10:20</div>
<div class="t" style="left:980.85px;top:1897.57px;font-size:26.50px;line-height:26.50px;letter-spacing:0.771px;color:#212529;font-weight:normal;">10:30</div>
<div class="t" style="left:1103.71px;top:1897.57px;font-size:26.50px;line-height:26.50px;letter-spacing:0.771px;color:#212529;font-weight:normal;">10:40</div>
<div class="t" style="left:1225.78px;top:1897.57px;font-size:26.50px;line-height:26.50px;letter-spacing:0.771px;color:#212529;font-weight:normal;">10:50</div>
<div class="t" style="left:1349.80px;top:1897.57px;font-size:26.50px;line-height:26.50px;letter-spacing:0.283px;color:#212529;font-weight:normal;">11:00</div>
<div class="t" style="left:1473.82px;top:1897.57px;font-size:26.50px;line-height:26.50px;letter-spacing:-0.497px;color:#212529;font-weight:normal;">11:10</div>
<div class="t" style="left:1593.93px;top:1897.57px;font-size:26.50px;line-height:26.50px;letter-spacing:0.483px;color:#212529;font-weight:normal;">11:20</div>
<div class="t" style="left:1715.99px;top:1897.57px;font-size:26.50px;line-height:26.50px;letter-spacing:0.483px;color:#212529;font-weight:normal;">11:30</div>
<div class="t" style="left:1838.05px;top:1897.57px;font-size:26.50px;line-height:26.50px;letter-spacing:0.483px;color:#212529;font-weight:normal;">11:40</div>
<div class="t" style="left:1960.92px;top:1897.57px;font-size:26.50px;line-height:26.50px;letter-spacing:0.283px;color:#212529;font-weight:normal;">11:50</div>
<div class="t" style="left:2081.02px;top:1897.57px;font-size:26.50px;line-height:26.50px;letter-spacing:0.771px;color:#212529;font-weight:normal;">12:00</div>
<div class="t" style="left:2205.04px;top:1897.57px;font-size:26.50px;line-height:26.50px;letter-spacing:-0.209px;color:#212529;font-weight:normal;">12:10</div>
<div class="t" style="left:2325.15px;top:1897.57px;font-size:26.50px;line-height:26.50px;letter-spacing:0.771px;color:#212529;font-weight:normal;">12:20</div>
<div class="t" style="left:2448.01px;top:1897.57px;font-size:26.50px;line-height:26.50px;letter-spacing:0.571px;color:#212529;font-weight:normal;">12:30</div>
<div class="t" style="left:96.00px;top:1138.30px;font-size:28px;line-height:28px;letter-spacing:0.707px;color:#212529;transform-origin:0 0;transform:rotate(-90deg);">Decibel-milliwatt</div><div class="t" style="left:96.00px;top:1807.80px;font-size:28px;line-height:28px;letter-spacing:0.714px;color:#212529;transform-origin:0 0;transform:rotate(-90deg);">Decibel-milliwatt</div>
</body></html>
